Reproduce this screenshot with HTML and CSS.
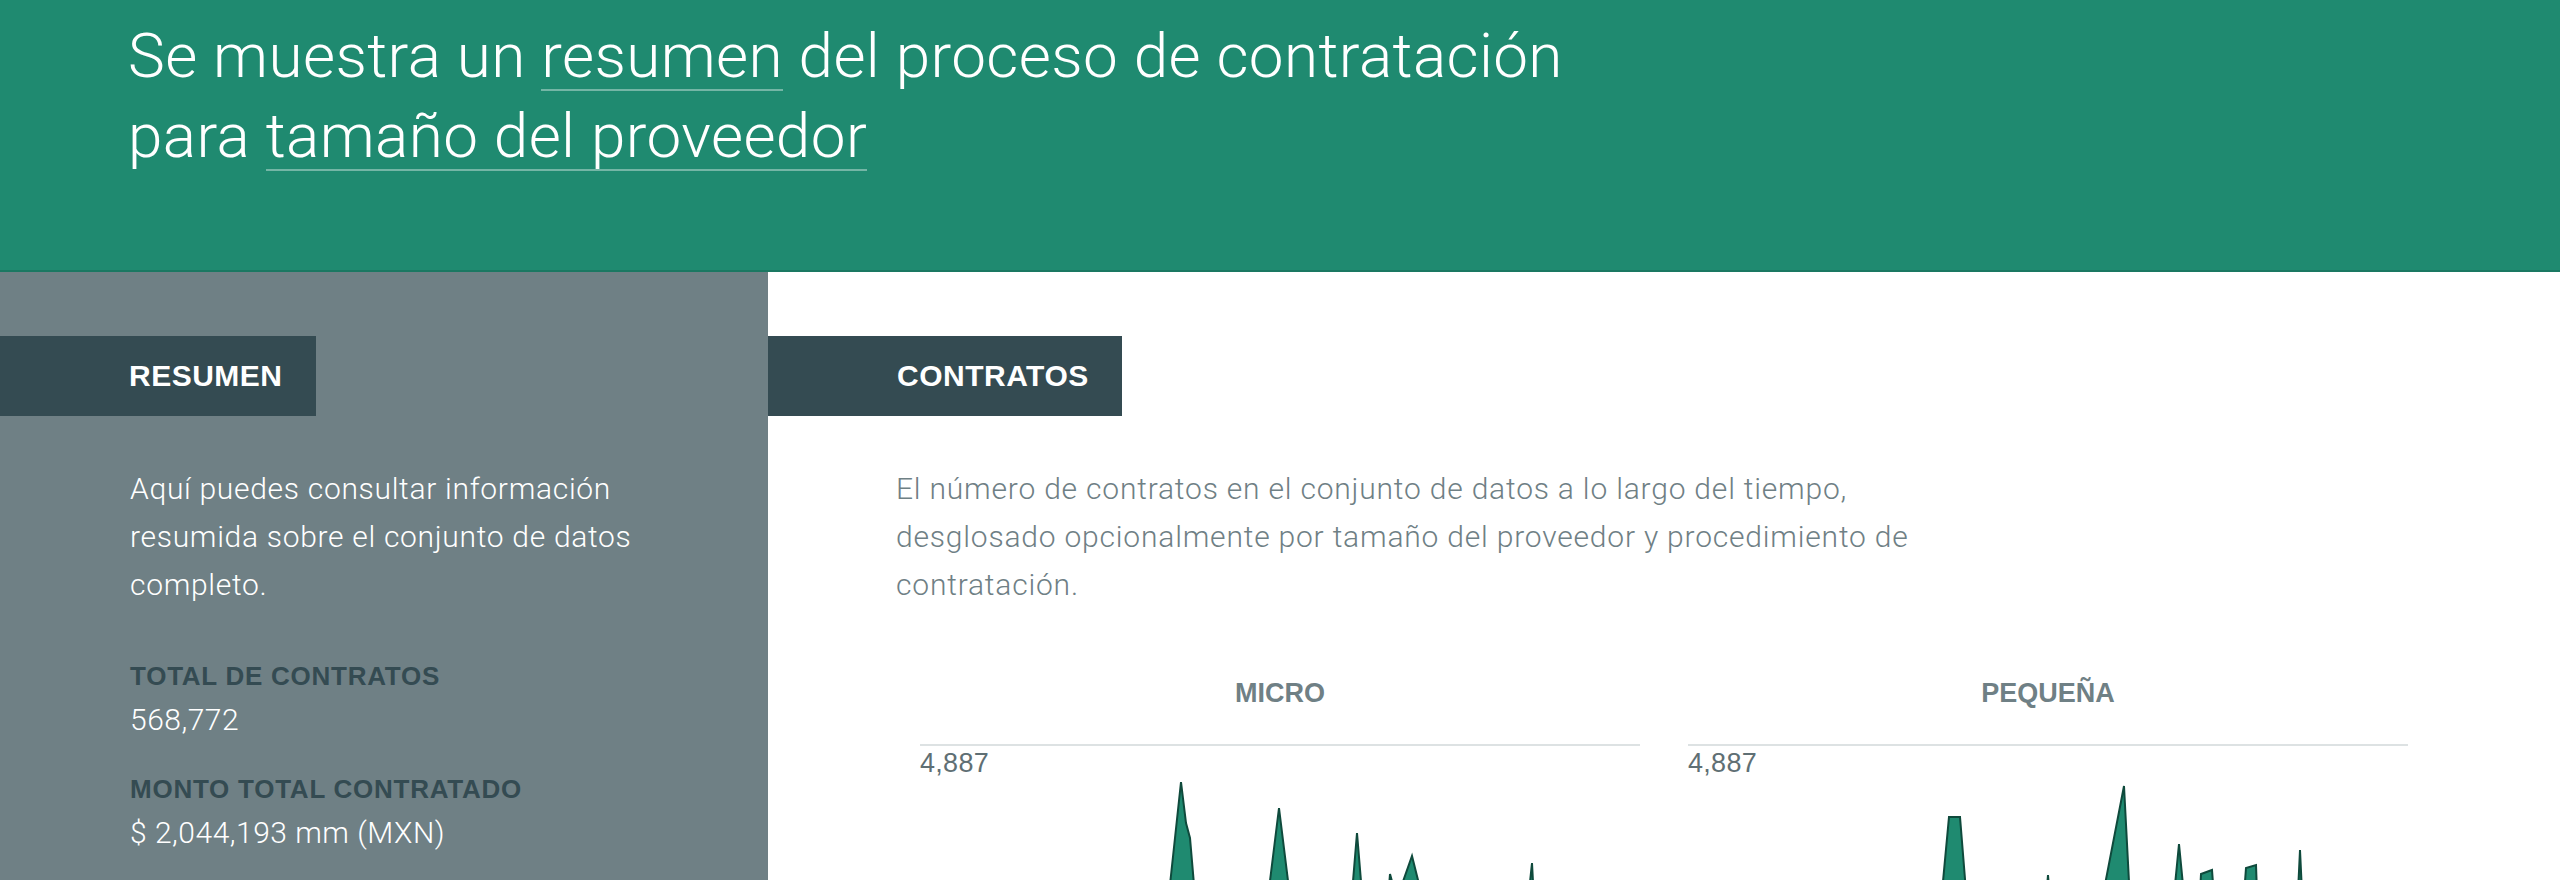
FILE: index.html
```html
<!DOCTYPE html>
<html lang="es">
<head>
<meta charset="utf-8">
<title>Resumen del proceso de contratación</title>
<link rel="stylesheet" href="styles.css">
</head>
<body>
<header class="hero">
  <h1 class="hero-title">Se muestra un <span class="hl">resumen</span> del proceso de contratación<br>para <span class="hl">tamaño del proveedor</span></h1>
</header>
<div class="layout">
  <aside class="summary">
    <h2 class="tab">RESUMEN</h2>
    <p class="intro">Aquí puedes consultar información resumida sobre el conjunto de datos completo.</p>
    <dl class="stats">
      <dt>TOTAL DE CONTRATOS</dt>
      <dd>568,772</dd>
      <dt>MONTO TOTAL CONTRATADO</dt>
      <dd>$ 2,044,193 mm (MXN)</dd>
    </dl>
  </aside>
  <main class="content">
    <h2 class="tab">CONTRATOS</h2>
    <p class="desc">El número de contratos en el conjunto de datos a lo largo del tiempo, desglosado opcionalmente por tamaño del proveedor y procedimiento de contratación.</p>
    <div class="charts">
      <section class="chart">
        <h3 class="chart-title">MICRO</h3>
        <div class="chart-body">
          <div class="chart-max">4,887</div>
          <svg class="chart-svg" viewBox="0 0 720 200" preserveAspectRatio="none">
            <path class="area" d="M0,200 L240,200 L261,4 L266,45 L270,60 L282,200 L338,200 L359,30 L380,200 L425,200 L437,55 L449,200 L462,200 L470,96 L476,118 L480,112 L492,78 L504,126 L512,200 L600,200 L612,85 L618,200 L720,200 Z"/>
          </svg>
        </div>
      </section>
      <section class="chart">
        <h3 class="chart-title">PEQUEÑA</h3>
        <div class="chart-body">
          <div class="chart-max">4,887</div>
          <svg class="chart-svg" viewBox="0 0 720 200" preserveAspectRatio="none">
            <path class="area" d="M0,200 L246,200 L261,39 L272,39 L285,200 L352,200 L360,97 L368,200 L399,200 L436,8 L446,200 L478,200 L491,66 L504,200 L508,200 L513,96 L524,92 L532,200 L550,200 L558,90 L568,87 L572,200 L606,200 L612,72 L618,200 L720,200 Z"/>
          </svg>
        </div>
      </section>
    </div>
  </main>
</div>
</body>
</html>
```
FILE: styles.css
```css
html, body {
  margin: 0;
  padding: 0;
  height: 880px;
  overflow: hidden;
  background: #ffffff;
  font-family: Roboto, "Liberation Sans", sans-serif;
}

.hero {
  box-sizing: border-box;
  height: 272px;
  background: #1f8a70;
  border-bottom: 2px solid #1a7862;
  padding: 16px 128px 0 128px;
}

.hero-title {
  margin: 0;
  font-family: Roboto, "Liberation Sans", sans-serif;
  font-weight: 300;
  font-size: 62px;
  line-height: 80px;
  color: #ffffff;
  letter-spacing: 0.4px;
}

.hl {
  display: inline-block;
  line-height: 1;
  padding-bottom: 2px;
  border-bottom: 2px solid rgba(255, 255, 255, 0.38);
}

.layout {
  display: flex;
  height: 608px;
}

.summary {
  box-sizing: border-box;
  width: 768px;
  flex: none;
  background: #6f8085;
  padding-top: 64px;
}

.content {
  flex: 1;
  padding-top: 64px;
}

.tab {
  display: inline-block;
  margin: 0;
  background: #344b52;
  color: #ffffff;
  font-family: "Liberation Sans", Arial, sans-serif;
  font-weight: 700;
  font-size: 30px;
  letter-spacing: 0.5px;
  line-height: 80px;
  height: 80px;
  padding: 0 33px 0 129px;
}

.intro,
.desc {
  margin: 49px 0 0 0;
  font-family: Roboto, "Liberation Sans", sans-serif;
  font-weight: 300;
  font-size: 30px;
  line-height: 48px;
  letter-spacing: 0.7px;
}

.intro {
  color: #ffffff;
  padding: 0 128px 0 130px;
}

.desc {
  color: #6f8085;
  padding-left: 128px;
  max-width: 1040px;
  letter-spacing: 0.8px;
}

.stats {
  margin: 52px 0 0 0;
  padding: 0 128px 0 130px;
}

.stats dt {
  font-family: "Liberation Sans", Arial, sans-serif;
  font-weight: 700;
  font-size: 26px;
  letter-spacing: 0.75px;
  line-height: 30px;
  color: #344b52;
  margin-top: 34px;
}

.stats dt:first-child {
  margin-top: 0;
}

.stats dd {
  margin: 9px 0 0 0;
  font-family: Roboto, "Liberation Sans", sans-serif;
  font-weight: 300;
  font-size: 30px;
  line-height: 40px;
  letter-spacing: 0.5px;
  color: #ffffff;
}

.charts {
  display: grid;
  grid-template-columns: 1fr 1fr;
  padding: 0 128px;
  margin-top: 69px;
}

.chart {
  padding: 0 24px;
}

.chart-title {
  margin: 0;
  text-align: center;
  font-family: "Liberation Sans", Arial, sans-serif;
  font-weight: 700;
  font-size: 27px;
  line-height: 30px;
  color: #6f8085;
}

.chart-body {
  margin-top: 36px;
  border-top: 2px solid #dde2e3;
}

.chart-max {
  margin-top: 2px;
  font-family: "Liberation Sans", Arial, sans-serif;
  font-size: 27px;
  line-height: 30px;
  letter-spacing: 0.3px;
  color: #5f6f74;
}

.chart-svg {
  display: block;
  width: 100%;
  height: 200px;
}

.area {
  fill: #1f8a70;
  stroke: #0f4a3c;
  stroke-width: 2;
  stroke-linejoin: miter;
}
```
